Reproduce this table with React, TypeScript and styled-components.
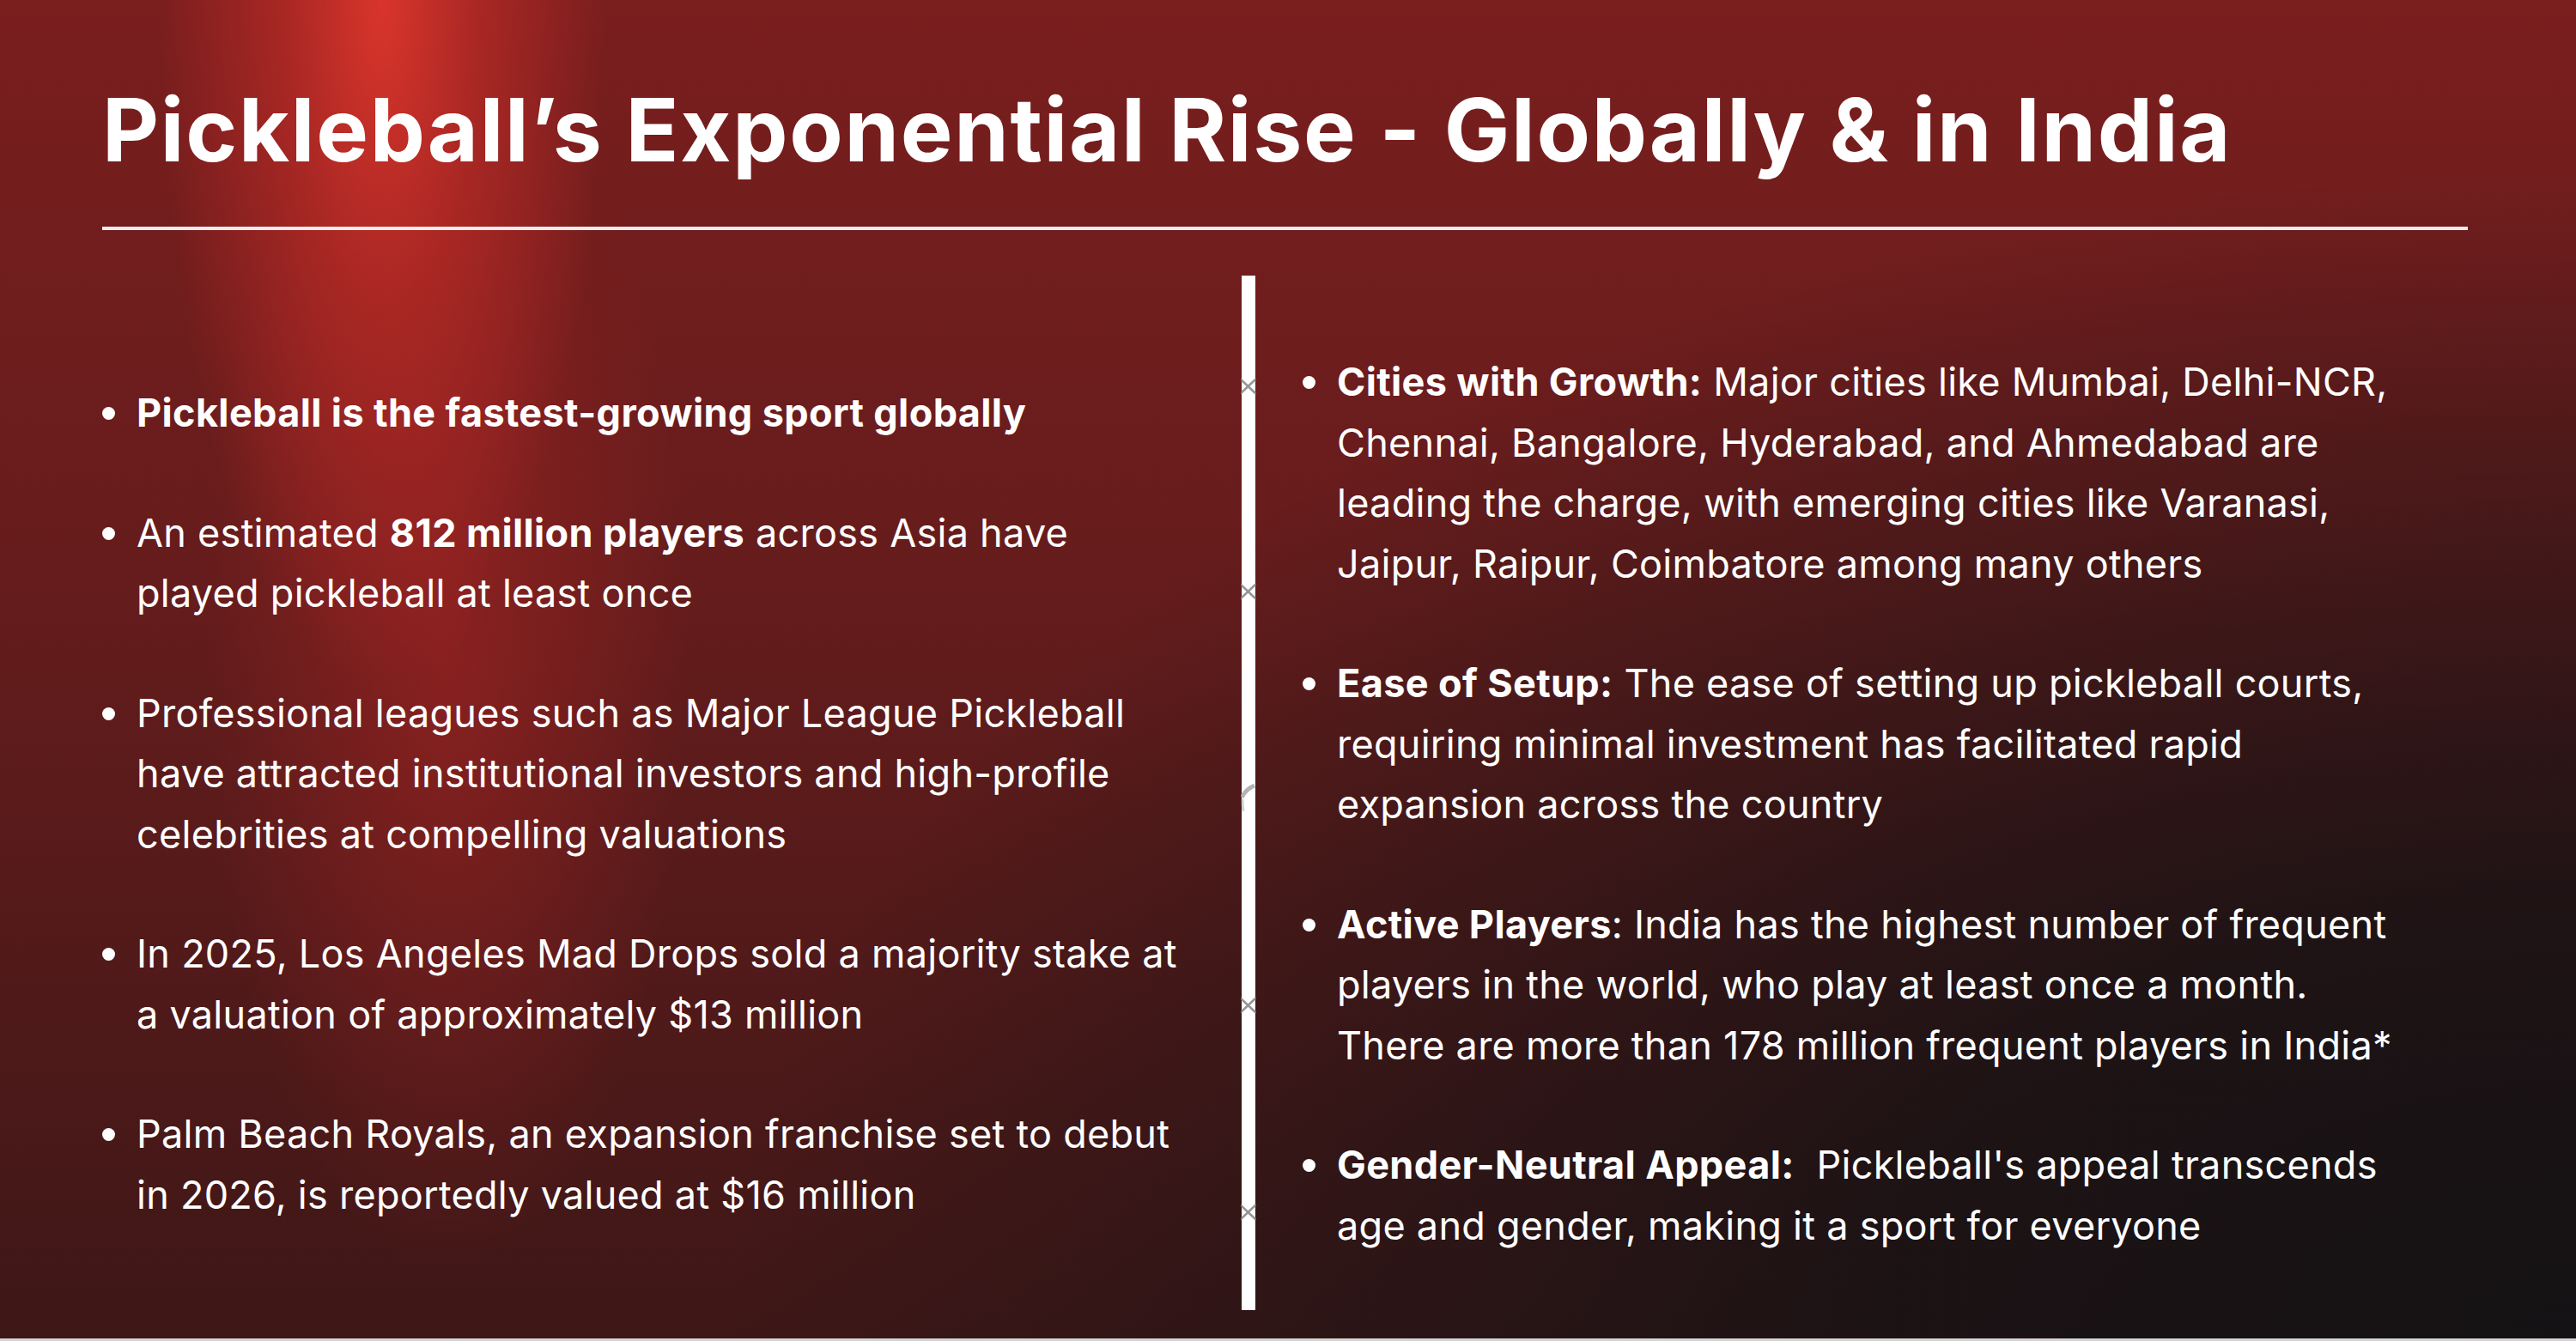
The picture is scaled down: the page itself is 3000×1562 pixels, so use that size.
import React from 'react';
import styled, { createGlobalStyle } from 'styled-components';

const GlobalStyle = createGlobalStyle`
	html, body {
		margin: 0;
		padding: 0;
		background: #151314;
	}
	* {
		box-sizing: border-box;
	}
`;

interface Point {
	lead?: string;
	text: React.ReactNode;
}

const leftPoints: Point[] = [
	{ lead: 'Pickleball is the fastest-growing sport globally', text: '' },
	{
		text: (
			<>
				An estimated <b>812 million players</b> across Asia have
				<br />
				played pickleball at least once
			</>
		),
	},
	{
		text: (
			<>
				Professional leagues such as Major League Pickleball
				<br />
				have attracted institutional investors and high-profile
				<br />
				celebrities at compelling valuations
			</>
		),
	},
	{
		text: (
			<>
				In 2025, Los Angeles Mad Drops sold a majority stake at
				<br />
				a valuation of approximately $13 million
			</>
		),
	},
	{
		text: (
			<>
				Palm Beach Royals, an expansion franchise set to debut
				<br />
				in 2026, is reportedly valued at $16 million
			</>
		),
	},
];

const rightPoints: Point[] = [
	{
		lead: 'Cities with Growth:',
		text: (
			<>
				{' '}Major cities like Mumbai, Delhi-NCR,
				<br />
				Chennai, Bangalore, Hyderabad, and Ahmedabad are
				<br />
				leading the charge, with emerging cities like Varanasi,
				<br />
				Jaipur, Raipur, Coimbatore among many others
			</>
		),
	},
	{
		lead: 'Ease of Setup:',
		text: (
			<>
				{' '}The ease of setting up pickleball courts,
				<br />
				requiring minimal investment has facilitated rapid
				<br />
				expansion across the country
			</>
		),
	},
	{
		lead: 'Active Players',
		text: (
			<>
				: India has the highest number of frequent
				<br />
				players in the world, who play at least once a month.
				<br />
				There are more than 178 million frequent players in India*
			</>
		),
	},
	{
		lead: 'Gender-Neutral Appeal:',
		text: (
			<>
				{'\u00a0 '}Pickleball's appeal transcends
				<br />
				age and gender, making it a sport for everyone
			</>
		),
	},
];

// marks on the net post, offsets from the top of the post
const crossMarks = [119, 358, 840, 1081];

const App: React.FC = () => {
	return (
		<>
			<GlobalStyle />
			<Slide>
				<Header>
					<Title>Pickleball’s Exponential Rise - Globally &amp; in India</Title>
					<Rule />
				</Header>
				<Body>
					<Column>
						<PointList>
							{leftPoints.map((p, i) => (
								<PointItem key={i}>
									<Dot />
									<PointText>
										{p.lead && <b>{p.lead}</b>}
										{p.text}
									</PointText>
								</PointItem>
							))}
						</PointList>
					</Column>
					<Post>
						{crossMarks.map(top => (
							<Mark key={top} style={{ top }} width='18' height='20' viewBox='0 0 18 20'>
								<path d='M0 2 L17 18 M0 18 L17 2' stroke='#7c7c7c' strokeWidth='2.6' fill='none' strokeLinecap='round' opacity='0.8' />
							</Mark>
						))}
						<Mark style={{ top: 580 }} width='18' height='50' viewBox='0 0 18 50'>
							<path d='M1 28 Q6 18 16 14' stroke='#a0a0a0' strokeWidth='5' fill='none' opacity='0.8' />
							<path d='M2 30 Q2 38 3 44' stroke='#b4b4b4' strokeWidth='3' fill='none' opacity='0.6' />
						</Mark>
					</Post>
					<RightColumn>
						<PointList>
							{rightPoints.map((p, i) => (
								<PointItem key={i}>
									<Dot />
									<PointText>
										<b>{p.lead}</b>
										{p.text}
									</PointText>
								</PointItem>
							))}
						</PointList>
					</RightColumn>
				</Body>
			</Slide>
		</>
	);
};

const Slide = styled.div`
	width: 3000px;
	height: 1562px;
	display: flex;
	flex-direction: column;
	padding: 0 126px 0 119px;
	border-bottom: 3px solid #d4d4d4;
	font-family: Inter, 'Noto Sans', 'DejaVu Sans', sans-serif;
	color: #ffffff;
	overflow: hidden;
	background:
		radial-gradient(ellipse 260px 800px at 445px 0px, rgba(222, 54, 44, 0.95) 0%, rgba(205, 46, 40, 0.55) 45%, rgba(180, 40, 36, 0) 100%),
		radial-gradient(ellipse 280px 720px at 520px 760px, rgba(176, 38, 36, 0.5) 0%, rgba(160, 36, 34, 0) 100%),
		radial-gradient(ellipse 2700px 1700px at 100% 100%, rgba(20, 18, 20, 1) 0%, rgba(22, 18, 20, 0.85) 30%, rgba(30, 20, 20, 0) 80%),
		linear-gradient(180deg, #7a1e1e 0%, #651c1c 45%, #3e1717 100%);
`;

const Header = styled.div`
	display: flex;
	flex-direction: column;
`;

const Title = styled.h1`
	margin: 0;
	padding-top: 91px;
	font-size: 102px;
	line-height: 120px;
	font-weight: 700;
	letter-spacing: 0.017em;
	white-space: nowrap;
`;

const Rule = styled.div`
	height: 4px;
	margin-top: 53px;
	background: #ececec;
`;

const Body = styled.div`
	display: flex;
	margin-top: 53px;
	height: 1205px;
`;

const Column = styled.div`
	width: 1327px;
	display: flex;
	flex-direction: column;
	justify-content: center;
	padding-top: 26px;
`;

const RightColumn = styled(Column)`
	flex: 1;
	padding-left: 55px;
`;

const Post = styled.div`
	position: relative;
	width: 16px;
	flex-shrink: 0;
	background: #ffffff;
`;

const Mark = styled.svg`
	position: absolute;
	left: -1px;
`;

const PointList = styled.ul`
	margin: 0;
	padding: 0;
	list-style: none;
	display: flex;
	flex-direction: column;
	gap: 69px;
`;

const PointItem = styled.li`
	display: flex;
	align-items: flex-start;
`;

const Dot = styled.span`
	width: 15px;
	height: 15px;
	margin-top: 28px;
	border-radius: 50%;
	background: #ffffff;
	flex-shrink: 0;
	margin-right: 25px;
`;

const PointText = styled.div`
	font-size: 45px;
	line-height: 70.5px;
	font-weight: 400;
	letter-spacing: 0.006em;
	white-space: nowrap;

	b {
		font-weight: 700;
		letter-spacing: 0.008em;
	}
`;

export default App;
